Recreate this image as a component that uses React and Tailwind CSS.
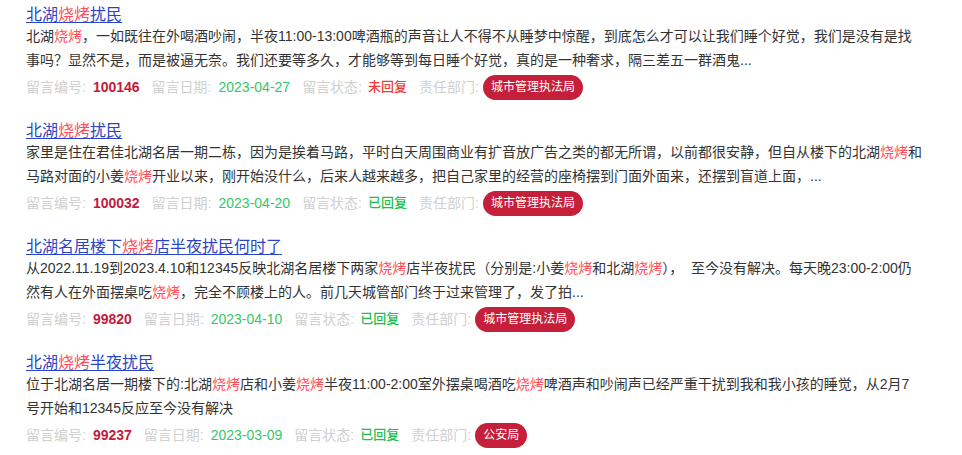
const KEYWORD = '烧烤';

// bodies are split per line to keep the wrapping of the reference
const messages = [
  {
    title: '北湖烧烤扰民',
    body: [
      '北湖烧烤，一如既往在外喝酒吵闹，半夜11:00-13:00啤酒瓶的声音让人不得不从睡梦中惊醒，到底怎么才可以让我们睡个好觉，我们是没有是找',
      '事吗？显然不是，而是被逼无奈。我们还要等多久，才能够等到每日睡个好觉，真的是一种奢求，隔三差五一群酒鬼...',
    ],
    id: '100146',
    date: '2023-04-27',
    replied: false,
    dept: '城市管理执法局',
  },
  {
    title: '北湖烧烤扰民',
    body: [
      '家里是住在君佳北湖名居一期二栋，因为是挨着马路，平时白天周围商业有扩音放广告之类的都无所谓，以前都很安静，但自从楼下的北湖烧烤和',
      '马路对面的小姜烧烤开业以来，刚开始没什么，后来人越来越多，把自己家里的经营的座椅摆到门面外面来，还摆到盲道上面，...',
    ],
    id: '100032',
    date: '2023-04-20',
    replied: true,
    dept: '城市管理执法局',
  },
  {
    title: '北湖名居楼下烧烤店半夜扰民何时了',
    body: [
      '从2022.11.19到2023.4.10和12345反映北湖名居楼下两家烧烤店半夜扰民（分别是:小姜烧烤和北湖烧烤），  至今没有解决。每天晚23:00-2:00仍',
      '然有人在外面摆桌吃烧烤，完全不顾楼上的人。前几天城管部门终于过来管理了，发了拍...',
    ],
    id: '99820',
    date: '2023-04-10',
    replied: true,
    dept: '城市管理执法局',
  },
  {
    title: '北湖烧烤半夜扰民',
    body: [
      '位于北湖名居一期楼下的:北湖烧烤店和小姜烧烤半夜11:00-2:00室外摆桌喝酒吃烧烤啤酒声和吵闹声已经严重干扰到我和我小孩的睡觉，从2月7',
      '号开始和12345反应至今没有解决',
    ],
    id: '99237',
    date: '2023-03-09',
    replied: true,
    dept: '公安局',
  },
];

// wrap the search keyword in a red span
function Highlight({ text }) {
  const parts = text.split(KEYWORD);
  return parts.map((part, i) => (
    <span key={i}>
      {part}
      {i < parts.length - 1 && <span className="text-[#ff4d5b]">{KEYWORD}</span>}
    </span>
  ));
}

function MessageItem({ item }) {
  return (
    <div className="pt-[6px] pb-4">
      <a href="#" className="block w-fit text-[16px] leading-[18px] text-[#2b44c6] underline underline-offset-2">
        <Highlight text={item.title} />
      </a>
      <div className="text-[14px] leading-[24px] text-[#333333]">
        {item.body.map((line, i) => (
          <p key={i} className="whitespace-pre">
            <Highlight text={line} />
          </p>
        ))}
      </div>
      <div className="mt-[2px] flex h-[26px] items-center text-[14px] leading-[26px] text-[#d0d0d0]">
        <span>留言编号:</span>
        <span className="ml-[7px] mr-3 font-bold text-[#c41a3c]">{item.id}</span>
        <span>留言日期:</span>
        <span className="ml-[7px] mr-3 text-[#34c766]">{item.date}</span>
        <span>留言状态:</span>
        {item.replied ? (
          <span className="ml-[6px] mr-3 text-[13px] font-medium text-[#1fbf4f]">已回复</span>
        ) : (
          <span className="ml-[6px] mr-3 text-[13px] font-medium text-[#f03a3a]">未回复</span>
        )}
        <span>责任部门:</span>
        <span className="ml-[4px] flex h-[25px] items-center rounded-full bg-[#c51f3a] px-2 text-[12px] text-white">
          {item.dept}
        </span>
      </div>
    </div>
  );
}

export default function App() {
  return (
    <div className="min-h-screen bg-white pl-[26px] font-['Liberation_Sans','Noto_Sans_CJK_SC',sans-serif]">
      <div className="w-[900px]">
        {messages.map((item) => (
          <MessageItem key={item.id} item={item} />
        ))}
      </div>
    </div>
  );
}
